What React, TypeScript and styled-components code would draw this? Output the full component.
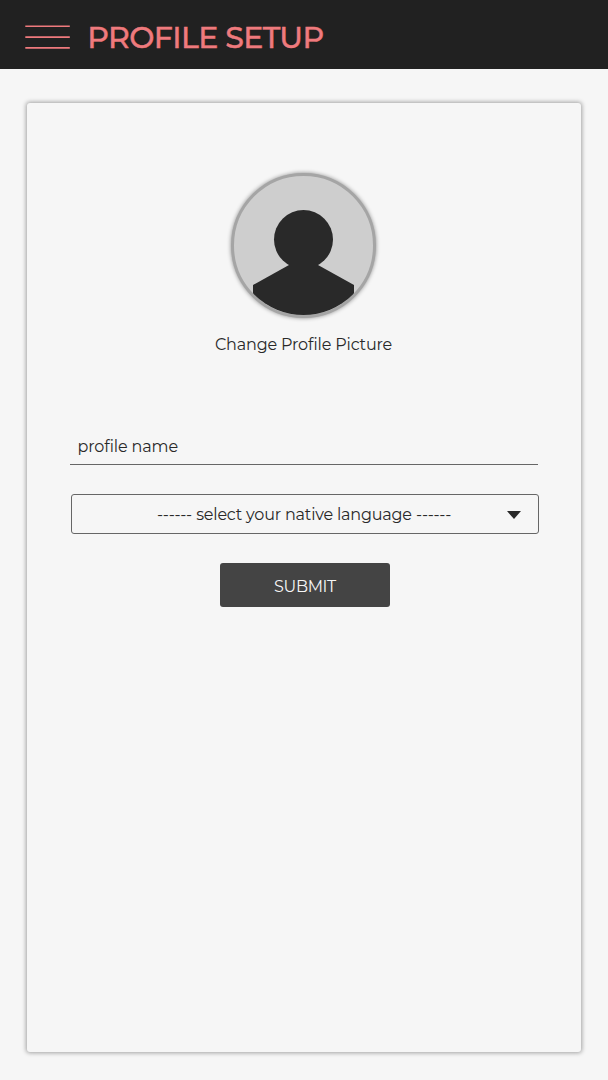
import React, { useState } from "react";
import styled, { createGlobalStyle } from "styled-components";

const GlobalStyle = createGlobalStyle`
  *, *::before, *::after { box-sizing: border-box; }
  body {
    margin: 0;
    background: #f6f6f6;
    color: #292929;
    font-family: Montserrat, Inter, "Liberation Sans", sans-serif;
    font-size: 16px;
  }
`;

const Page = styled.div`
  display: flex;
  flex-direction: column;
  min-height: 1080px;
`;

const Header = styled.header`
  display: flex;
  align-items: center;
  height: 69px;
  padding: 0 25px;
  background: #212121;
`;

const MenuButton = styled.button`
  display: flex;
  margin: 5px 17.3px 0 0;
  padding: 0;
  border: 0;
  background: none;
`;

const Title = styled.h1`
  margin: 6px 0 0;
  color: #ef7a7d;
  font-size: 30px;
  font-weight: 500;
  line-height: 36px;
  letter-spacing: -0.6px;
  -webkit-text-stroke: 0.4px #ef7a7d;
  white-space: nowrap;
`;

const Card = styled.main`
  display: flex;
  flex-direction: column;
  align-items: center;
  width: 554px;
  height: 949px;
  margin: 34px 27px 28px;
  padding-top: 70px;
  border-radius: 3px;
  box-shadow: 0 0 4px 1px rgba(0, 0, 0, 0.34);
`;

const Avatar = styled.div`
  width: 145px;
  height: 145px;
  margin-right: 1px;
  border: 3px solid #a5a5a5;
  border-radius: 50%;
  background: #cecece;
  box-shadow: 0 0 4px rgba(0, 0, 0, 0.45);
  overflow: hidden;
`;

const Caption = styled.span<{ $spacing: number }>`
  letter-spacing: ${(p) => p.$spacing}px;
  line-height: 20px;
  white-space: nowrap;
  font-feature-settings: "liga" 1;
`;

const AvatarLabel = styled(Caption)`
  margin: 17px 1px 0 0;
`;

const Form = styled.form`
  display: flex;
  flex-direction: column;
  align-items: center;
  width: 468px;
  margin-top: 73px;
`;

const NameInput = styled.input`
  width: 468px;
  height: 37px;
  padding: 0 8px 0 7.5px;
  border: 0;
  border-bottom: 1px solid #666;
  outline: 0;
  background: none;
  color: inherit;
  font: inherit;
  letter-spacing: -0.13px;
  font-feature-settings: "liga" 1;
  &::placeholder { color: inherit; opacity: 1; }
`;

const Select = styled.button`
  display: grid;
  grid-template-columns: 1fr auto 1fr;
  align-items: center;
  align-self: flex-start;
  width: 468px;
  height: 40px;
  margin: 29px 0 0 1px;
  padding: 2px 17px 0 15px;
  border: 1px solid #666;
  border-radius: 3px;
  background: none;
  color: inherit;
  font: inherit;
`;

const SelectText = styled.span`
  grid-column: 2;
  display: flex;
  gap: 4.3px;
`;

const Arrow = styled.svg`
  justify-self: end;
`;

const Submit = styled.button`
  width: 170px;
  height: 44px;
  margin: 29px 0 0 2px;
  padding: 3px 0 0;
  border: 0;
  border-radius: 3px;
  background: #444;
  color: #f6f6f6;
  font: inherit;
  letter-spacing: -0.35px;
`;

export default function App() {
  const [name, setName] = useState("");
  return (
    <>
      <GlobalStyle />
      <Page>
        <Header>
          <MenuButton aria-label="Menu">
            <svg width="45" height="24" viewBox="0 0 45 24" stroke="#ef7a7d" strokeWidth="1.6">
              <path d="M0.3 1.2H44.8M0.3 12.1H44.8M0.3 22.9H44.8" />
            </svg>
          </MenuButton>
          <Title>PROFILE SETUP</Title>
        </Header>
        <Card>
          <Avatar>
            <svg width="139" height="139" viewBox="0 0 139 139" fill="#292929">
              <circle cx="69.5" cy="63.5" r="29.5" />
              <path d="M55 89L19 109V139H120V109L84 89Z" />
            </svg>
          </Avatar>
          <AvatarLabel $spacing={-0.16}>Change Profile Picture</AvatarLabel>
          <Form onSubmit={(e) => e.preventDefault()}>
            <NameInput placeholder="profile name" value={name} onChange={(e) => setName(e.target.value)} />
            <Select type="button">
              <SelectText>
                <Caption $spacing={-0.3}>------</Caption>
                <Caption $spacing={-0.19}>select your native language</Caption>
                <Caption $spacing={-0.3}>------</Caption>
              </SelectText>
              <Arrow width="14" height="8" viewBox="0 0 14 8" fill="#292929">
                <path d="M0 0H14L7 8Z" />
              </Arrow>
            </Select>
            <Submit type="submit">SUBMIT</Submit>
          </Form>
        </Card>
      </Page>
    </>
  );
}
